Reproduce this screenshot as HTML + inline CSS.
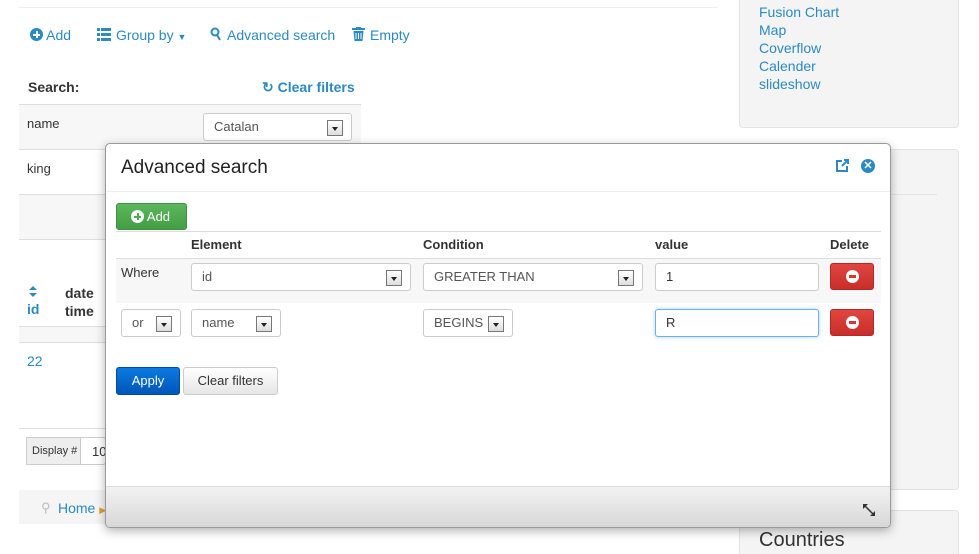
<!DOCTYPE html>
<html style="width:979px;height:554px;overflow:hidden"><head><meta charset="utf-8"><style>
*{box-sizing:border-box;margin:0;padding:0}
body{width:979px;height:554px;overflow:hidden;background:#fff;font-family:"Liberation Sans",sans-serif;font-size:13px;color:#333;position:relative}
.a{position:absolute}
.blue{color:#2a8ac4}
.sel{position:absolute;background:#fff;border:1px solid #ccc;border-radius:3px;font-size:13px;color:#555;padding-left:10px;line-height:26px;height:28px}
.sel .dd{position:absolute;right:8px;top:6px;width:16px;height:16px;border:1px solid #777;background:linear-gradient(#fff,#ddd)}
.sel .dd:after{content:"";position:absolute;left:4px;top:6px;border-left:3px solid transparent;border-right:3px solid transparent;border-top:4px solid #222}
.del{position:absolute;width:44px;height:27px;border-radius:3px;background:linear-gradient(#e0453f,#c92f2a);border:1px solid #b52a25}
.del:after{content:"";position:absolute;left:15px;top:6px;width:13px;height:13px;border-radius:50%;background:#fff}
.del:before{content:"";position:absolute;left:18px;top:11px;width:7px;height:3px;background:#d13a35;z-index:1}
.panel{position:absolute;background:#f4f4f4;border:1px solid #e3e3e3;border-radius:4px}
</style></head><body>
<div class="a" style="left:19px;top:7px;width:699px;height:1px;background:#eee"></div>
<!-- toolbar -->
<div class="a blue" style="left:30px;top:27px;font-size:14px">
<span style="display:inline-block;width:13px;height:13px;border-radius:50%;background:#2a8ac4;position:relative;vertical-align:-1px"><span style="position:absolute;left:3px;top:5.5px;width:7px;height:2px;background:#fff"></span><span style="position:absolute;left:5.5px;top:3px;width:2px;height:7px;background:#fff"></span></span> Add</div>
<svg class="a" style="left:97px;top:28px" width="14" height="13" viewBox="0 0 14 13" fill="#2a8ac4"><rect x="0" y="0" width="3" height="3"/><rect x="4" y="0" width="10" height="3"/><rect x="0" y="5" width="3" height="3"/><rect x="4" y="5" width="10" height="3"/><rect x="0" y="10" width="3" height="3"/><rect x="4" y="10" width="10" height="3"/></svg>
<div class="a blue" style="left:116px;top:27px;font-size:14px">Group by <span style="font-size:9px">▼</span></div>
<svg class="a" style="left:210px;top:27px" width="11" height="14" viewBox="0 0 11 14" fill="none" stroke="#2a8ac4" stroke-width="2"><circle cx="5" cy="5" r="3.5"/><path d="M7 8l3 5"/></svg>
<div class="a blue" style="left:227px;top:27px;font-size:14px">Advanced search</div>
<svg class="a" style="left:352px;top:27px" width="13" height="14" viewBox="0 0 13 14" fill="#2a8ac4"><rect x="0" y="1" width="13" height="2"/><rect x="4" y="0" width="5" height="2"/><path d="M1.5 4h10l-1 10h-8z"/><path d="M4 6v6M6.5 6v6M9 6v6" stroke="#fff" stroke-width="1"/></svg>
<div class="a blue" style="left:370px;top:27px;font-size:14px">Empty</div>
<!-- search -->
<div class="a" style="left:28px;top:79px;font-weight:bold;font-size:14px">Search:</div>
<div class="a blue" style="left:262px;top:79px;font-weight:bold;font-size:14px">↻ Clear filters</div>
<div class="a" style="left:19px;top:104px;width:342px;height:1px;background:#ddd"></div>
<div class="a" style="left:19px;top:105px;width:342px;height:44px;background:#f7f7f7"></div>
<div class="a" style="left:27px;top:116px">name</div>
<div class="sel" style="left:203px;top:113px;width:149px">Catalan<span class="dd"></span></div>
<div class="a" style="left:19px;top:149px;width:342px;height:1px;background:#ddd"></div>
<div class="a" style="left:27px;top:161px">king</div>
<div class="a" style="left:19px;top:194px;width:342px;height:1px;background:#ddd"></div>
<div class="a" style="left:19px;top:195px;width:342px;height:44px;background:#f7f7f7"></div>
<div class="a" style="left:19px;top:239px;width:342px;height:1px;background:#ddd"></div>
<svg class="a" style="left:29px;top:286px" width="8" height="11" viewBox="0 0 8 11" fill="#2a8ac4"><path d="M0 4L4 0L8 4z M0 7h8L4 11z"/></svg>
<div class="a blue" style="left:27px;top:301px;font-weight:bold;font-size:14px">id</div>
<div class="a" style="left:65px;top:284px;font-weight:bold;font-size:14px;line-height:18px">date<br>time</div>
<div class="a" style="left:19px;top:326px;width:342px;height:17px;background:#f7f7f7;border-top:1px solid #ddd;border-bottom:1px solid #ddd"></div>
<div class="a blue" style="left:27px;top:353px;font-size:14px">22</div>
<div class="a" style="left:19px;top:428px;width:342px;height:1px;background:#ddd"></div>
<div class="a" style="left:26px;top:437px;width:80px;height:28px;border:1px solid #ccc;border-radius:3px;background:#fff"></div>
<div class="a" style="left:26px;top:437px;width:55px;height:28px;border:1px solid #ccc;background:#eee;font-size:11px;line-height:26px;padding-left:5px">Display #</div>
<div class="a" style="left:92px;top:444px;font-size:13px">10</div>
<div class="a" style="left:19px;top:490px;width:90px;height:34px;background:#f5f5f5"></div>
<div class="a" style="left:41px;top:500px;color:#bbb">⚲</div>
<div class="a blue" style="left:58px;top:500px;font-size:14px">Home <span style="color:#e0a030;font-size:9px">▶</span></div>
<!-- right panels -->
<div class="panel" style="left:739px;top:-5px;width:220px;height:133px"></div>
<div class="a blue" style="left:759px;top:3px;font-size:14px;line-height:18px">Fusion Chart<br>Map<br>Coverflow<br>Calender<br>slideshow</div>
<div class="panel" style="left:739px;top:149px;width:220px;height:341px"></div>
<div class="a" style="left:760px;top:194px;width:177px;height:1px;background:#e3e3e3"></div>
<div class="panel" style="left:739px;top:510px;width:220px;height:60px"></div>
<div class="a" style="left:759px;top:529px;font-size:20px;color:#333">Countries</div>
<!-- modal -->
<div class="a" style="left:105px;top:143px;width:786px;height:385px;background:#fff;border:1px solid #999;border-radius:5px;box-shadow:0 3px 10px rgba(0,0,0,.3);overflow:hidden">
 <div class="a" style="left:15px;top:13px;font-size:19px;color:#222">Advanced search</div>
 <svg class="a" style="left:730px;top:15px" width="13" height="13" viewBox="0 0 13 13" fill="none" stroke="#2a8ac4" stroke-width="2"><path d="M6 2H1v10h10V7"/><path d="M6 7l6-6M8 1h4v4"/></svg>
 <div class="a" style="left:755px;top:15px;width:14px;height:14px;border-radius:50%;background:#2a8ac4;color:#fff;font-size:11px;line-height:14px;text-align:center;font-weight:bold">✕</div>
 <div class="a" style="left:0;top:47px;width:786px;height:1px;background:#eee"></div>
 <div class="a" style="left:10px;top:59px;width:71px;height:27px;border-radius:3px;background:linear-gradient(#5cb85c,#449d44);border:1px solid #3e8f3e;color:#fff;font-size:13px;line-height:25px;padding-left:14px"><span style="display:inline-block;width:13px;height:13px;border-radius:50%;background:#fff;position:relative;vertical-align:-2px"><span style="position:absolute;left:3px;top:5.5px;width:7px;height:2px;background:#4cae4c"></span><span style="position:absolute;left:5.5px;top:3px;width:2px;height:7px;background:#4cae4c"></span></span> Add</div>
 <div class="a" style="left:10px;top:87px;width:765px;height:1px;background:#ddd"></div>
 <div class="a" style="left:85px;top:93px;font-weight:bold">Element</div>
 <div class="a" style="left:317px;top:93px;font-weight:bold">Condition</div>
 <div class="a" style="left:549px;top:93px;font-weight:bold">value</div>
 <div class="a" style="left:724px;top:93px;font-weight:bold">Delete</div>
 <div class="a" style="left:10px;top:114px;width:765px;height:45px;background:#f7f7f7;border-top:1px solid #ddd"></div>
 <div class="a" style="left:15px;top:121px">Where</div>
 <div class="sel" style="left:85px;top:119px;width:220px">id<span class="dd"></span></div>
 <div class="sel" style="left:317px;top:119px;width:220px">GREATER THAN<span class="dd"></span></div>
 <div class="sel" style="left:549px;top:119px;width:164px;color:#333">1</div>
 <div class="del" style="left:724px;top:119px"></div>
 <div class="sel" style="left:15px;top:165px;width:60px">or<span class="dd"></span></div>
 <div class="sel" style="left:85px;top:165px;width:90px">name<span class="dd"></span></div>
 <div class="sel" style="left:317px;top:165px;width:90px">BEGINS<span class="dd"></span></div>
 <div class="sel" style="left:549px;top:165px;width:164px;color:#333;border-color:#72aede;box-shadow:0 0 4px rgba(82,168,236,.5)">R</div>
 <div class="del" style="left:724px;top:165px"></div>
 <div class="a" style="left:10px;top:223px;width:64px;height:28px;border-radius:3px;background:linear-gradient(#0a7be0,#0055b8);border:1px solid #004a9f;color:#fff;line-height:26px;text-align:center;font-size:13px">Apply</div>
 <div class="a" style="left:77px;top:223px;width:95px;height:28px;border-radius:3px;background:linear-gradient(#fff,#e6e6e6);border:1px solid #ccc;color:#333;line-height:26px;text-align:center;font-size:13px">Clear filters</div>
 <div class="a" style="left:0;top:342px;width:786px;height:43px;background:linear-gradient(#f2f2f2,#d6d6d6);border-top:1px solid #ddd"></div>
 <svg class="a" style="left:756px;top:359px" width="14" height="14" viewBox="0 0 14 14" fill="#333"><path d="M1 1h5L1 6z M13 13H8l5-5z"/><path d="M3 3l8 8" stroke="#333" stroke-width="1.5"/></svg>
</div>
</body></html>
